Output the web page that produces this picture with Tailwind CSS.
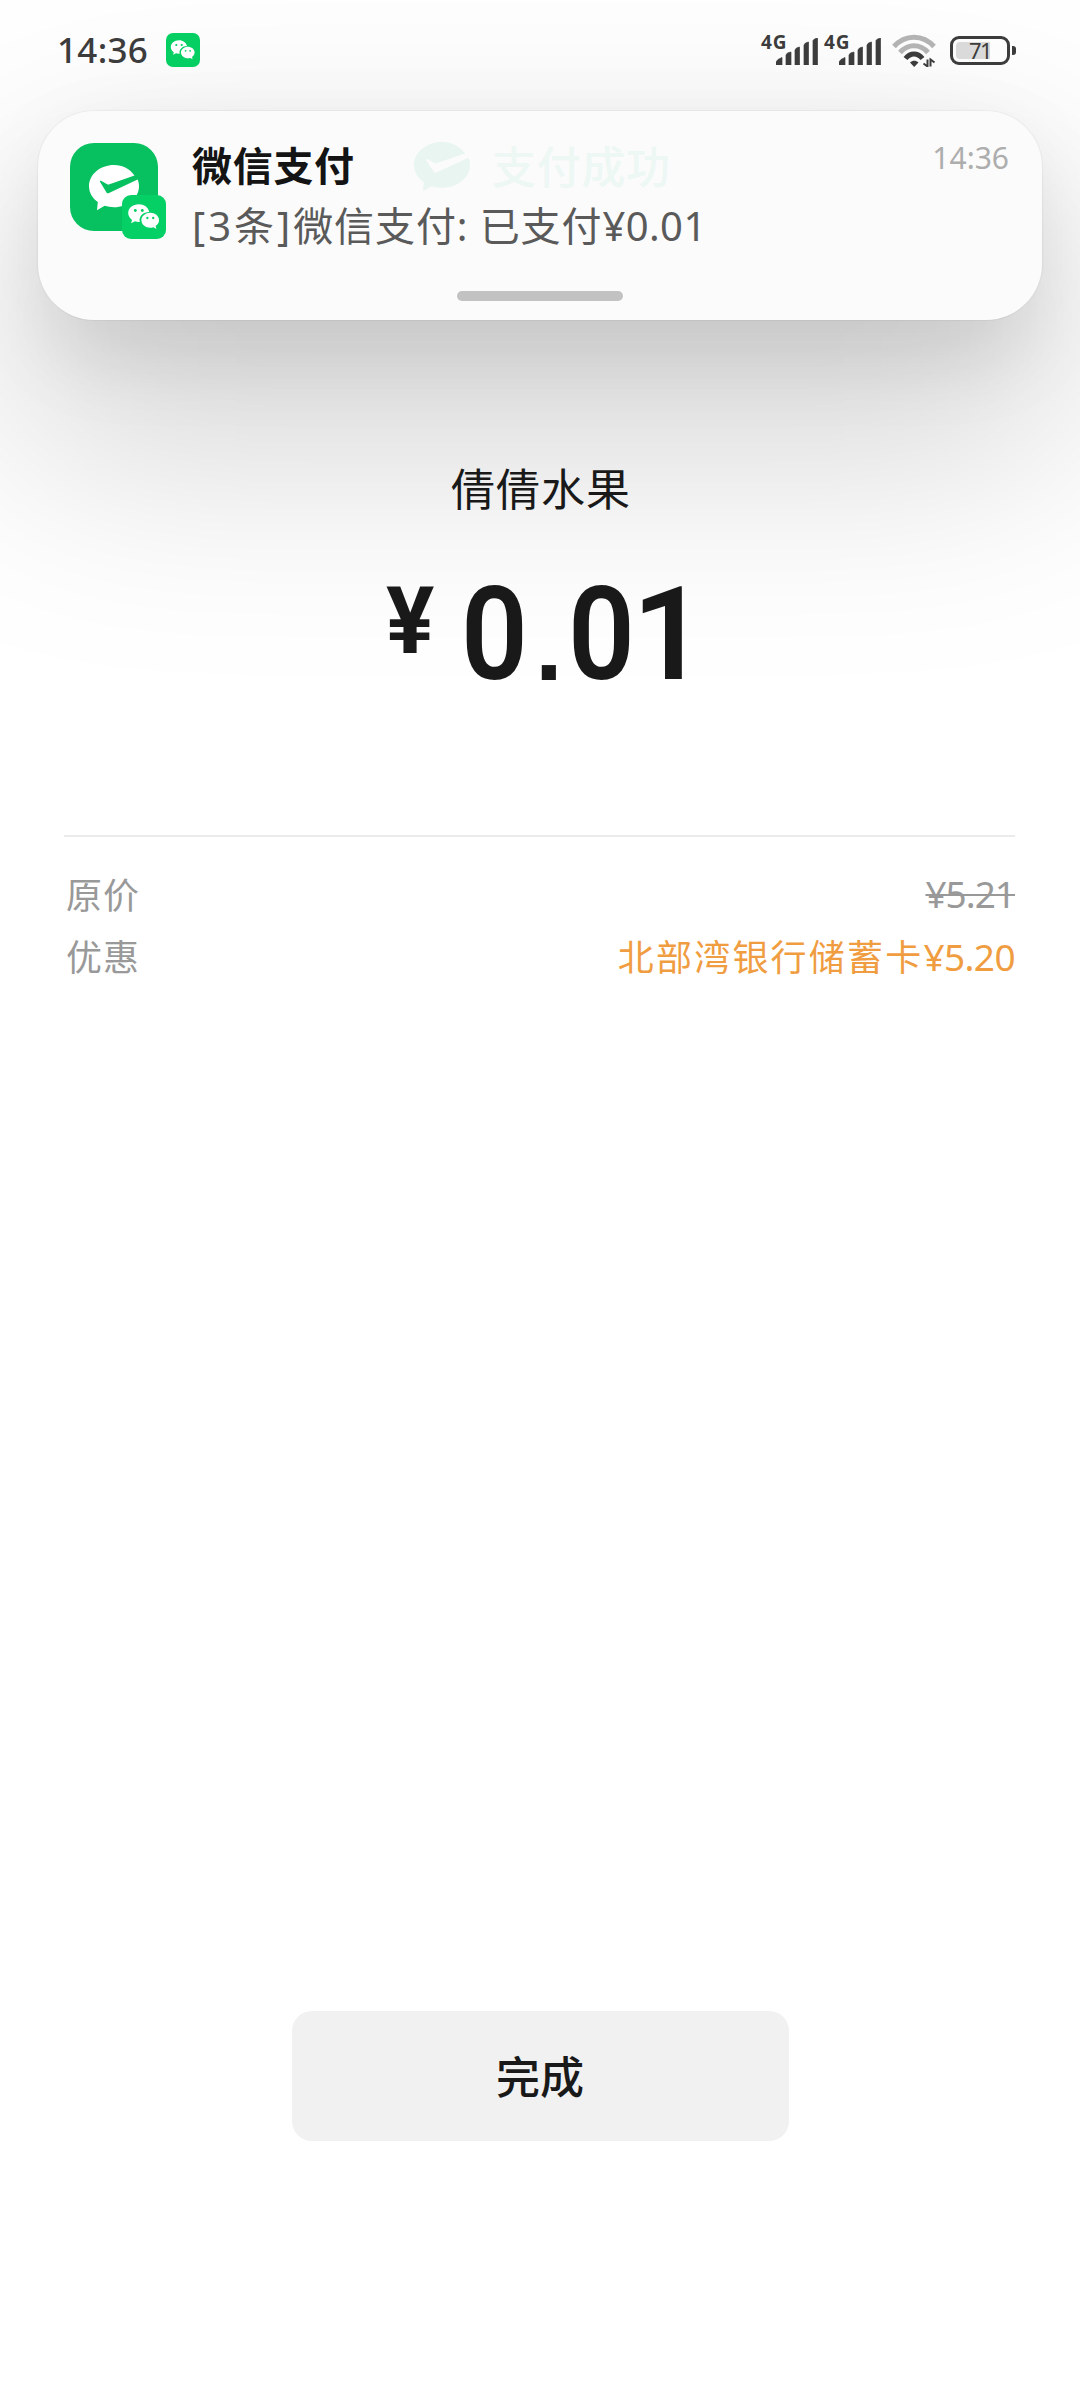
<!DOCTYPE html>
<html lang="zh-CN">
<head>
<meta charset="utf-8">
<title>支付成功</title>
<script src="https://cdn.jsdelivr.net/npm/@tailwindcss/browser@4"></script>
</head>
<body class="bg-white">
<svg class="hidden">
  <symbol id="wechat" viewBox="0 0 34 34">
    <path fill="#fff" d="M13 7.2c-4.700 0-8.200 3-8.200 6.800 0 2.200 1.200 4 3 5.300l-.8 2.500 3-1.500c1 .3 1.900.5 3 .5h.7c-.9-4.500 2.800-7.700 7.300-7.700C20.400 9.600 17 7.200 13 7.200z"/>
    <path fill="#fff" d="M28.600 19.500c0-3.300-3.200-5.700-6.800-5.700s-6.800 2.500-6.800 5.700 3.100 5.800 6.800 5.800c.9 0 1.700-.1 2.500-.4l2.300 1.300-.6-2.200c1.600-1.200 2.600-2.700 2.600-4.500z"/>
    <g fill="#05cf63"><circle cx="10.300" cy="12" r="1.100"/><circle cx="15.700" cy="12" r="1.100"/><circle cx="19.600" cy="17.800" r=".9"/><circle cx="24.100" cy="17.800" r=".9"/></g>
  </symbol>
  <symbol id="signal" viewBox="0 0 42 27">
    <path d="M0 27v-3l2-2.500 4-2V27zM10 27V17l1.500-2L15 14v13zM19 27V12l1.500-2L23.500 9v18zM28 27V7l1.500-2L32.500 4v23zM37 27V2.500L38.500 1 41.500 0v27z" stroke-linejoin="round" stroke-width=".7"/>
  </symbol>
  <symbol id="paycheck" viewBox="0 0 50 46">
    <path d="M45.500 10.500C41 4 33.500 0 25 0 11.200 0 0 9.500 0 21.200c0 6.400 3.500 12 8.800 15.900L8 45.300l7.600-4.500c3 .9 6.100 1.400 9.400 1.400 13.800 0 25-9.400 25-21 0-2.300-.5-4.600-1.400-6.700L20 28.100c-1 .5-1.900.3-2.500-.7L11 16.700c-.3-.8.3-1.300 1-.9l6.200 3.400c.8.4 1.500.4 2.300.1z"/>
  </symbol>
</svg>
<div class="relative flex h-[2400px] w-[1080px] flex-col overflow-hidden bg-white font-['Noto_Sans','Noto_Sans_CJK_SC',sans-serif] text-[#191919]">

  <main class="flex flex-1 flex-col">
    <section class="flex flex-col pt-[463px]">
      <h1 class="relative z-20 h-[52px] pl-[2px] text-center text-[44px] leading-[52px] tracking-[1px]">倩倩水果</h1>
      <div class="relative z-20 mt-[52px] flex h-[136px] items-start pl-[386px] font-['Roboto',sans-serif] font-semibold">
        <span class="mt-[9px] w-[75px] origin-left scale-x-[.98] text-[92px] font-bold leading-[92px]">¥</span>
        <div class="flex text-[130px] leading-[136px]">
          <span class="w-[69px] origin-left scale-x-[.9]">0</span>
          <span class="w-[38px] text-center font-['Liberation_Sans'] text-[100px] font-bold leading-[156px]">.</span>
          <span class="w-[69px] origin-left scale-x-[.9]">0</span>
          <span class="-ml-[5px]">1</span>
        </div>
      </div>
    </section>
    <section class="mx-16 mt-[132px] flex w-[951px] flex-col border-t-2 border-[#ebebeb] pt-[28px] text-[36px] leading-[62px] text-[#999]">
      <div class="flex justify-between"><span class="ml-[2px] tracking-[1px]">原价</span><span class="-mt-[2px] h-[62px] text-[37px] tracking-[-1px] line-through decoration-2">¥5.21</span></div>
      <div class="flex justify-between"><span class="ml-[2px] tracking-[1px]">优惠</span><span class="-mt-px text-[#f09d42] tracking-[2.200px]">北部湾银行储蓄卡<span class="text-[37px] tracking-[-.6px]">¥5.20</span></span></div>
    </section>
  </main>
  <footer class="flex h-[389px] justify-center">
    <button class="h-[130px] w-[497px] rounded-[20px] bg-[#f1f1f1] pt-[2px] text-[44px] font-medium leading-[128px]">完成</button>
  </footer>

  <header class="absolute inset-x-0 top-0 z-20 flex h-[100px] items-center justify-between pr-[70px] pl-[57px] text-[#3c3c3c]">
    <div class="flex items-center gap-[18px]">
      <span class="text-[35px] font-medium leading-[100px] tracking-[.3px]">14:36</span>
      <svg class="size-[34px] rounded-[7px] bg-[#05cf63]"><use href="#wechat"/></svg>
    </div>
    <div class="flex items-center">
      <div class="relative h-[34px] w-[63px]">
        <span class="absolute top-0 left-0 text-[19px] font-bold leading-[19px] tracking-[.8px]">4G</span>
        <svg class="absolute top-[5px] left-[15px] h-[27px] w-[42px] fill-[#3c3c3c] stroke-[#3c3c3c]"><use href="#signal"/></svg>
      </div>
      <div class="relative h-[34px] w-[63px]">
        <span class="absolute top-0 left-0 text-[19px] font-bold leading-[19px] tracking-[.8px]">4G</span>
        <svg class="absolute top-[5px] left-[15px] h-[27px] w-[42px] fill-[#3c3c3c] stroke-[#3c3c3c]"><use href="#signal"/></svg>
      </div>
      <svg class="mr-[14px] ml-[5px] h-[34px] w-[44px]" viewBox="0 0 44 34" fill="none">
        <path d="M2 13.500C13 1 31 1 42 13.500" stroke="#b3b3b3" stroke-width="5"/>
        <path d="M8 19.500c8-9 20-9 28 0" stroke="#b3b3b3" stroke-width="5"/>
        <path d="M13.500 25.500c5-6 12-6 17 0" stroke="#3c3c3c" stroke-width="5"/>
        <path d="M18 29.500c2.500-2.500 6-2.500 8.500 0L22.200 34z" fill="#3c3c3c"/>
        <path d="M35.500 26.500v7l-4-3M38.500 33.500v-7l4 3" stroke="#3c3c3c" stroke-width="2"/>
      </svg>
      <div class="relative flex h-[29px] w-[60px] items-center justify-center rounded-[9px] border-[3px] border-[#3c3c3c]">
        <div class="absolute inset-y-[3px] left-[3px] w-[34px] rounded-l-[4px] bg-[#dadada]"></div>
        <span class="relative text-[22px] leading-[22px] tracking-[-1.500px]">71</span>
        <div class="absolute top-[7px] -right-[9px] h-[9px] w-[4px] rounded-r-[3px] bg-[#3c3c3c]"></div>
      </div>
    </div>
  </header>

  <div class="absolute top-[190px] left-[10px] h-[260px] w-[1060px] rounded-[80px] bg-black/17 blur-[110px]"></div>
  <div class="absolute top-[145px] left-[48px] h-[209px] w-[984px] rounded-[56px] bg-black/10 blur-[38px]"></div>
  <article class="absolute top-[111px] left-[38px] z-10 flex h-[209px] w-[1004px] flex-col items-center rounded-[56px] bg-[#fbfbfb] shadow-[0_0_1px_1px_rgba(0,0,0,0.04)]">
    <div class="absolute top-[30px] left-[376px] flex items-center gap-[22px] text-[#edf7f4]">
      <svg class="h-[50px] w-[56px] fill-[#e9f5f1]" viewBox="0 0 50 46" preserveAspectRatio="none"><use href="#paycheck" width="50" height="46"/></svg>
      <span class="text-[44px] font-medium leading-[52px] tracking-[.7px]">支付成功</span>
    </div>
    <div class="relative flex w-full pr-[33px] pl-8">
      <div class="relative mt-8 flex size-[88px] rounded-[24px] bg-[#07c160]">
        <svg class="mt-[22px] ml-[19px] h-[46px] w-[50px] fill-white"><use href="#paycheck"/></svg>
        <svg class="absolute top-[52px] left-[52px] size-[44px] rounded-[9px] bg-[#05d066]"><use href="#wechat"/></svg>
      </div>
      <div class="ml-[34px] flex-1 pt-[25px]">
        <h2 class="text-[40px] font-semibold leading-[60px] tracking-[.7px] text-[#141414]">微信支付</h2>
        <p class="text-[40px] leading-[60px] tracking-[.9px] text-[#5a5a5a]"><span class="tracking-[3px]">[3条]</span>微信支付: 已支付<span class="tracking-[.4px]">¥0.01</span></p>
      </div>
      <time class="mt-[26px] text-[30px] leading-[42px] text-[#adadad]">14:36</time>
    </div>
    <div class="absolute top-[180px] h-[10px] w-[166px] rounded-full bg-[#c2c2c2]"></div>
  </article>
</div>
</body>
</html>
